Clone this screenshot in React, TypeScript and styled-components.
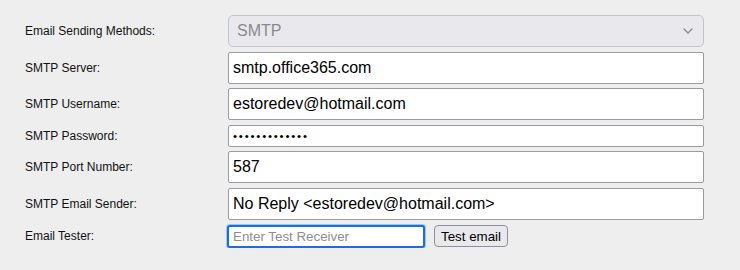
import styled, { createGlobalStyle } from 'styled-components'

const GlobalStyle = createGlobalStyle`
  html, body {
    margin: 0;
    padding: 0;
    background: #eeeeee;
  }
  body {
    font-family: "Liberation Sans", Arial, sans-serif;
  }
`

const rows = [
  { label: 'SMTP Server:', value: 'smtp.office365.com', big: true },
  { label: 'SMTP Username:', value: 'estoredev@hotmail.com', big: true },
  { label: 'SMTP Password:', value: 'xxxxxxxxxxxxx', big: false, secret: true },
  { label: 'SMTP Port Number:', value: '587', big: true },
  { label: 'SMTP Email Sender:', value: 'No Reply <estoredev@hotmail.com>', big: true },
]

const App = () => {
  return (
    <>
      <GlobalStyle />
      <Form>
        <Label>Email Sending Methods:</Label>
        <SelectBox>
          <span>SMTP</span>
          <svg width="10" height="6" viewBox="0 0 10 6">
            <path d="M1 1l4 4 4-4" fill="none" stroke="#8a8a8f" strokeWidth="1.3" strokeLinecap="round" strokeLinejoin="round" />
          </svg>
        </SelectBox>
        {rows.map((r) => (
          <Row key={r.label}>
            <Label>{r.label}</Label>
            <TextInput
              $big={r.big}
              type={r.secret ? 'password' : 'text'}
              defaultValue={r.value}
              readOnly
            />
          </Row>
        ))}
        <Label>Email Tester:</Label>
        <TesterCell>
          <TesterInput placeholder="Enter Test Receiver" />
          <TestButton>Test email</TestButton>
        </TesterCell>
      </Form>
    </>
  )
}
export default App

const Form = styled.div`
  display: grid;
  grid-template-columns: 203px 476px;
  row-gap: 4.6px;
  padding: 15px 0 0 25px;
  align-items: center;
`
const Row = styled.div`
  display: contents;
`
const Label = styled.div`
  font-size: 12px;
  color: #111;
`
const SelectBox = styled.div`
  box-sizing: border-box;
  height: 32px;
  display: flex;
  align-items: center;
  justify-content: space-between;
  padding: 0 10px 0 8px;
  background: #e9e9ed;
  border: 1px solid #c3c3c8;
  border-radius: 5px;
  font-size: 16px;
  color: #8a8a8e;
`
const TextInput = styled.input<{ $big: boolean }>`
  box-sizing: border-box;
  width: 100%;
  height: ${(p) => (p.$big ? '32px' : '22px')};
  margin: 0;
  padding: 0 4px;
  background: #fff;
  border: 1px solid #9a9aa2;
  border-radius: 2px;
  font-family: "Liberation Sans", Arial, sans-serif;
  font-size: ${(p) => (p.$big ? '16px' : '11.5px')};
  letter-spacing: ${(p) => (p.$big ? '0' : '1.8px')};
  color: #000;
  outline: none;
`
const TesterCell = styled.div`
  display: flex;
  align-items: center;
  gap: 9px;
`
const TesterInput = styled.input`
  box-sizing: border-box;
  width: 198px;
  height: 23px;
  margin: 0 0 0 -1px;
  padding: 0 4px;
  background: #fff;
  border: 2px solid #1a6fe0;
  border-radius: 3px;
  box-shadow: 0 0 0 1px #9cc3f5;
  font-family: "Liberation Sans", Arial, sans-serif;
  font-size: 13.33px;
  outline: none;
  &::placeholder {
    color: #8d8d92;
  }
`
const TestButton = styled.button`
  box-sizing: border-box;
  height: 22px;
  padding: 0 6px;
  background: #e9e9ed;
  border: 1px solid #8f8f9d;
  border-radius: 4px;
  font-family: "Liberation Sans", Arial, sans-serif;
  font-size: 13.33px;
  color: #000;
`
